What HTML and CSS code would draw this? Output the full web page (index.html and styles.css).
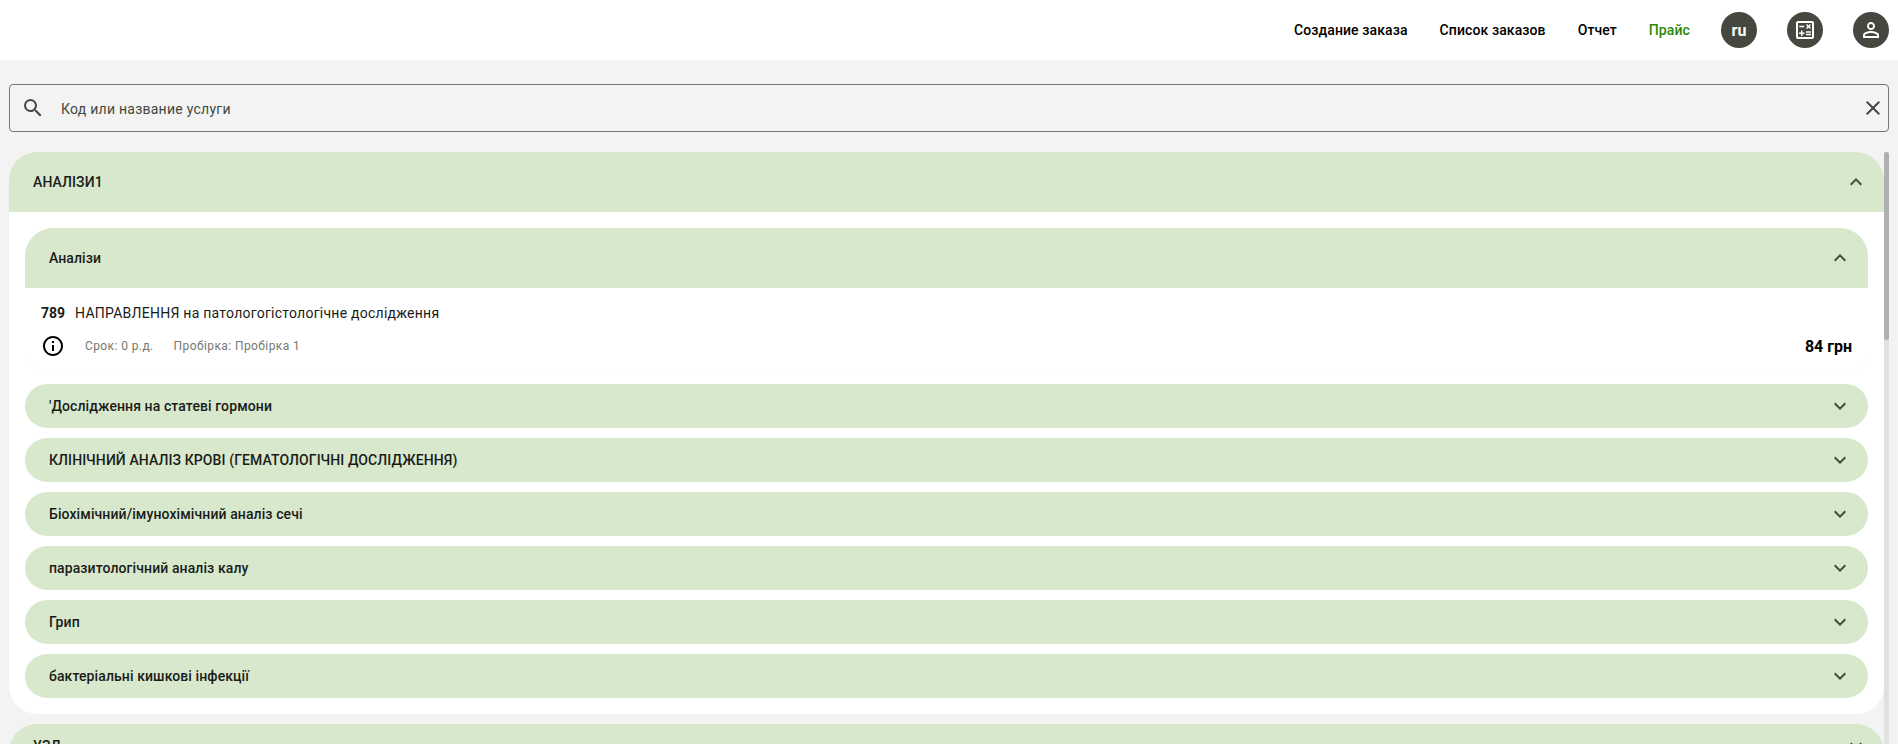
FILE: index.html
```html
<!DOCTYPE html>
<html lang="ru">
<head>
<meta charset="utf-8">
<title>Прайс</title>
<link rel="stylesheet" href="styles.css">
</head>
<body>
<header class="topbar">
  <nav class="nav">
    <a class="nav-link">Создание заказа</a>
    <a class="nav-link">Список заказов</a>
    <a class="nav-link">Отчет</a>
    <a class="nav-link nav-link-active">Прайс</a>
  </nav>
  <div class="actions">
    <button class="circle-btn circle-text">ru</button>
    <button class="circle-btn"><svg class="icon" viewBox="0 0 24 24"><path d="M19 3H5c-1.1 0-2 .9-2 2v14c0 1.1.9 2 2 2h14c1.1 0 2-.9 2-2V5c0-1.1-.9-2-2-2zm0 16H5V5h14v14zM6.25 7.72h5v1.5h-5zM13 15.75h5v1.5h-5zM13 13.25h5v1.5h-5zM8 18h1.5v-2h2v-1.5h-2v-2H8v2H6V16h2zM14.09 10.95l1.41-1.41 1.41 1.41 1.06-1.06-1.41-1.42 1.41-1.41L16.91 6 15.5 7.41 14.09 6l-1.06 1.06 1.41 1.41-1.41 1.42z"/></svg></button>
    <button class="circle-btn"><svg class="icon" viewBox="0 0 24 24"><path d="M12 5.9c1.16 0 2.1.94 2.1 2.1s-.94 2.1-2.1 2.1S9.9 9.16 9.9 8s.94-2.1 2.1-2.1m0 9c2.97 0 6.1 1.46 6.1 2.1v1.1H5.9V17c0-.64 3.13-2.1 6.1-2.1M12 4C9.79 4 8 5.79 8 8s1.79 4 4 4 4-1.79 4-4-1.79-4-4-4zm0 9c-2.67 0-8 1.34-8 4v3h16v-3c0-2.66-5.33-4-8-4z"/></svg></button>
  </div>
</header>
<main class="main">
  <div class="search">
    <svg class="icon search-icon" viewBox="0 0 24 24"><path d="M15.5 14h-.79l-.28-.27A6.471 6.471 0 0 0 16 9.5 6.5 6.5 0 1 0 9.5 16c1.61 0 3.09-.59 4.23-1.57l.27.28v.79l5 4.99L20.49 19l-4.99-5zm-6 0C7.01 14 5 11.99 5 9.5S7.01 5 9.5 5 14 7.01 14 9.5 11.99 14 9.5 14z"/></svg>
    <span class="search-text">Код или название услуги</span>
    <svg class="icon close-icon" viewBox="0 0 24 24"><path d="M19 6.41 17.59 5 12 10.59 6.41 5 5 6.41 10.59 12 5 17.59 6.41 19 12 13.41 17.59 19 19 17.59 13.41 12z"/></svg>
  </div>
  <div class="list-wrap">
    <div class="list">
      <section class="panel">
        <div class="head head-open">
          <span>АНАЛІЗИ1</span>
          <svg class="icon chevron" viewBox="0 0 24 24"><path d="M12 8l-6 6 1.41 1.41L12 10.83l4.59 4.58L18 14z"/></svg>
        </div>
        <div class="panel-body">
          <section class="sub">
            <div class="head head-open">
              <span>Аналізи</span>
              <svg class="icon chevron" viewBox="0 0 24 24"><path d="M12 8l-6 6 1.41 1.41L12 10.83l4.59 4.58L18 14z"/></svg>
            </div>
            <article class="service">
              <div class="service-title"><b class="service-code">789</b><span>НАПРАВЛЕННЯ на патологогістологічне дослідження</span></div>
              <div class="service-meta">
                <svg class="icon info-icon" viewBox="0 0 24 24"><path d="M11 7h2v2h-2zm0 4h2v6h-2zm1-9C6.48 2 2 6.48 2 12s4.48 10 10 10 10-4.48 10-10S17.52 2 12 2zm0 18c-4.41 0-8-3.59-8-8s3.59-8 8-8 8 3.59 8 8-3.59 8-8 8z"/></svg>
                <span class="meta-text">Срок: 0 р.д.</span>
                <span class="meta-text">Пробірка: Пробірка 1</span>
                <b class="price">84 грн</b>
              </div>
            </article>
          </section>
          <div class="head head-closed"><span>'Дослідження на статеві гормони</span><svg class="icon chevron" viewBox="0 0 24 24"><path d="M16.59 8.59 12 13.17 7.41 8.59 6 10l6 6 6-6z"/></svg></div>
          <div class="head head-closed"><span>КЛІНІЧНИЙ АНАЛІЗ КРОВІ (ГЕМАТОЛОГІЧНІ ДОСЛІДЖЕННЯ)</span><svg class="icon chevron" viewBox="0 0 24 24"><path d="M16.59 8.59 12 13.17 7.41 8.59 6 10l6 6 6-6z"/></svg></div>
          <div class="head head-closed"><span>Біохімічний/імунохімічний аналіз сечі</span><svg class="icon chevron" viewBox="0 0 24 24"><path d="M16.59 8.59 12 13.17 7.41 8.59 6 10l6 6 6-6z"/></svg></div>
          <div class="head head-closed"><span>паразитологічний аналіз калу</span><svg class="icon chevron" viewBox="0 0 24 24"><path d="M16.59 8.59 12 13.17 7.41 8.59 6 10l6 6 6-6z"/></svg></div>
          <div class="head head-closed"><span>Грип</span><svg class="icon chevron" viewBox="0 0 24 24"><path d="M16.59 8.59 12 13.17 7.41 8.59 6 10l6 6 6-6z"/></svg></div>
          <div class="head head-closed"><span>бактеріальні кишкові інфекції</span><svg class="icon chevron" viewBox="0 0 24 24"><path d="M16.59 8.59 12 13.17 7.41 8.59 6 10l6 6 6-6z"/></svg></div>
        </div>
      </section>
      <div class="head head-closed head-top"><span>УЗД</span><svg class="icon chevron" viewBox="0 0 24 24"><path d="M16.59 8.59 12 13.17 7.41 8.59 6 10l6 6 6-6z"/></svg></div>
    </div>
    <div class="scroll-track"><div class="scroll-thumb"></div></div>
  </div>
</main>
</body>
</html>
```
FILE: styles.css
```css
* { box-sizing: border-box; }
html, body { height: 100%; }
body {
  margin: 0;
  overflow: hidden;
  display: flex;
  flex-direction: column;
  background: #f3f3f3;
  color: #1a1c18;
  font-family: Roboto, "Noto Sans", sans-serif;
  font-size: 14px;
}
.icon { display: block; width: 24px; height: 24px; fill: currentColor; flex: none; }

.topbar {
  flex: none;
  height: 60px;
  padding: 0 9px 0 0;
  background: #fff;
  display: flex;
  align-items: center;
  justify-content: flex-end;
}
.nav { display: flex; align-items: center; gap: 32px; }
.nav-link { color: #000; font-weight: 500; font-size: 14px; letter-spacing: .1px; }
.nav-link-active { color: #2a8a07; }
.actions { display: flex; align-items: center; gap: 30px; margin-left: 31px; }
.circle-btn {
  width: 36px;
  height: 36px;
  padding: 0;
  border: 0;
  border-radius: 50%;
  background: #44483e;
  color: #fff;
  display: flex;
  align-items: center;
  justify-content: center;
}
.circle-text { font: 700 16px Roboto, sans-serif; }

.main {
  flex: 1;
  min-height: 0;
  display: flex;
  flex-direction: column;
  padding: 24px 9px 0;
}
.search {
  flex: none;
  height: 48px;
  border: 1px solid #74796e;
  border-radius: 4px;
  display: flex;
  align-items: center;
  padding: 0 3px 0 11px;
  color: #44483e;
}
.search-icon { margin-right: 16px; }
.search-text { flex: 1; padding-top: 1px; font-size: 14px; letter-spacing: .25px; }
.list-wrap {
  flex: 1;
  min-height: 0;
  margin-top: 20px;
  display: flex;
}
.list { flex: 1; min-width: 0; overflow: hidden; }
.scroll-track { flex: none; width: 5px; background: #e1e1e1; }
.scroll-thumb { height: 188px; background: #b0b0b0; border-radius: 3px; }

.panel { background: #fff; border-radius: 28px; }
.panel-body {
  padding: 16px;
  display: flex;
  flex-direction: column;
  gap: 10px;
}
.head {
  display: flex;
  align-items: center;
  justify-content: space-between;
  padding: 0 16px 0 24px;
  background: #d8e8cd;
  font-weight: 500;
  font-size: 14px;
  letter-spacing: .1px;
}
.head-open { height: 60px; border-radius: 28px 28px 0 0; }
.head-closed { height: 44px; border-radius: 22px; }
.head-top { margin-top: 10px; border-radius: 28px 28px 0 0; }
.chevron { color: #44483e; }

.service {
  height: 86px;
  padding: 15px 16px 0;
  border-radius: 0 0 24px 24px;
  box-shadow: 0 1px 1px rgba(0, 0, 0, .015);
}
.service-title { display: flex; gap: 10px; line-height: 20px; letter-spacing: .25px; }
.service-code { font-weight: 700; letter-spacing: 0; }
.service-meta {
  display: flex;
  align-items: center;
  gap: 20px;
  margin-top: 11px;
  color: #75796f;
  font-size: 12px;
  letter-spacing: .4px;
}
.info-icon { color: #000; }
.price { margin-left: auto; color: #000; font-size: 16px; font-weight: 700; letter-spacing: 0; }
```
